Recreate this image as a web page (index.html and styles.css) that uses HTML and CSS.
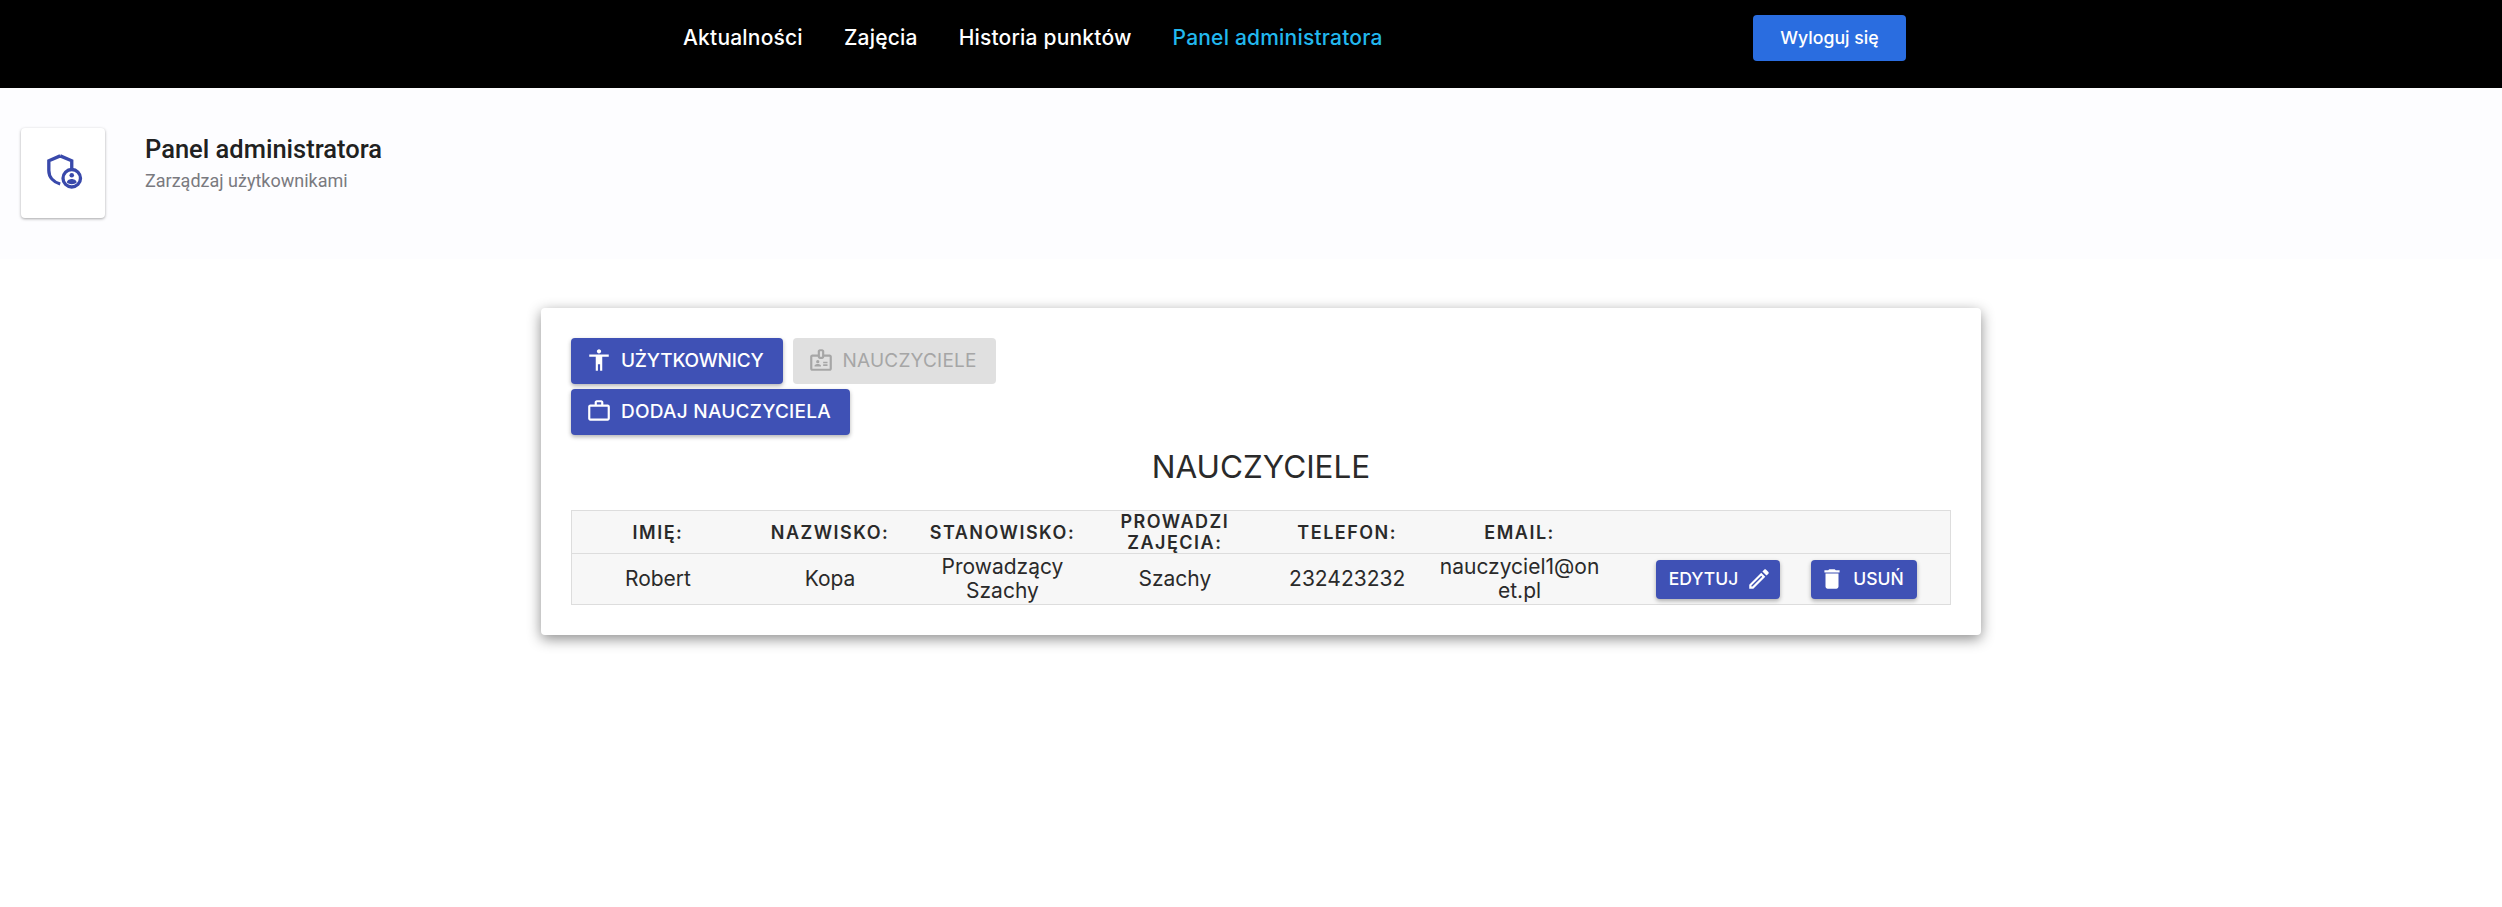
FILE: index.html
```html
<!DOCTYPE html>
<html lang="pl">
<head>
  <meta charset="UTF-8">
  <title>Panel administratora</title>
  <link rel="stylesheet" href="styles.css">
</head>
<body>
  <!-- Top navigation -->
  <nav class="navbar">
    <div class="nav-links">
      <a href="#">Aktualności</a>
      <a href="#">Zajęcia</a>
      <a href="#">Historia punktów</a>
      <a href="#" class="active">Panel administratora</a>
    </div>
    <button class="logout">Wyloguj się</button>
  </nav>

  <!-- Page title -->
  <header class="page-title">
    <div class="title-icon">
      <svg viewBox="0 0 24 24" width="42" height="42">
        <path class="shield" d="M10.4 2.2 17 5v6M10.4 2.2 3.9 5v5.5c0 3.8 2.7 6.7 6.5 7.8"/>
        <circle class="ring" cx="17" cy="15" r="5"/>
        <circle cx="17" cy="13.3" r="1.3"/>
        <path d="M14.2 17.4c0-1.4 1.9-2 2.8-2s2.8.6 2.8 2c-.7.6-1.7 1-2.8 1s-2.1-.4-2.8-1z"/>
      </svg>
    </div>
    <div>
      <h1>Panel administratora</h1>
      <p>Zarządzaj użytkownikami</p>
    </div>
  </header>

  <main class="card">
    <div class="actions">
      <button class="btn tight">
        <svg viewBox="0 0 24 24"><path d="M12 2c1.1 0 2 .9 2 2s-.9 2-2 2-2-.9-2-2 .9-2 2-2zm9 7h-6v13h-2v-6h-2v6H9V9H3V7h18v2z"/></svg>
        Użytkownicy
      </button>
      <button class="btn disabled">
        <svg viewBox="0 0 24 24"><path d="M20 7h-5V4c0-1.1-.9-2-2-2h-2c-1.1 0-2 .9-2 2v3H4c-1.1 0-2 .9-2 2v11c0 1.1.9 2 2 2h16c1.1 0 2-.9 2-2V9c0-1.1-.9-2-2-2zM11 4h2v5h-2V4zm9 16H4V9h5c0 1.1.9 2 2 2h2c1.1 0 2-.9 2-2h5v11z"/><path d="M14 13.5h4V15h-4zM14 16h4v1.5h-4z"/><circle cx="9" cy="13.5" r="1.5"/><path d="M6 18h6v-.75c0-1-2-1.5-3-1.5s-3 .5-3 1.5V18z"/></svg>
        Nauczyciele
      </button>
      <button class="btn">
        <svg viewBox="0 0 24 24"><path d="M14 6V4h-4v2h4zM4 8v11h16V8H4zm16-2c1.11 0 2 .89 2 2v11c0 1.11-.89 2-2 2H4c-1.11 0-2-.89-2-2l.01-11c0-1.11.88-2 1.99-2h4V4c0-1.11.89-2 2-2h4c1.11 0 2 .89 2 2v2h4z"/></svg>
        Dodaj nauczyciela
      </button>
    </div>

    <h2>NAUCZYCIELE</h2>

    <table>
      <thead>
        <tr>
          <th>Imię:</th>
          <th>Nazwisko:</th>
          <th>Stanowisko:</th>
          <th>Prowadzi zajęcia:</th>
          <th>Telefon:</th>
          <th>Email:</th>
          <th></th>
          <th></th>
        </tr>
      </thead>
      <tbody>
        <tr>
          <td>Robert</td>
          <td>Kopa</td>
          <td>Prowadzący Szachy</td>
          <td>Szachy</td>
          <td>232423232</td>
          <td class="email">nauczyciel1@onet.pl</td>
          <td>
            <button class="btn small edit">
              Edytuj
              <svg viewBox="0 0 24 24"><path d="M3 17.25V21h3.75L17.81 9.94l-3.75-3.75L3 17.25zM5.92 19H5v-.92l9.06-9.06.92.92L5.92 19zM20.71 5.63l-2.34-2.34c-.2-.2-.45-.29-.71-.29s-.51.1-.7.29l-1.83 1.83 3.75 3.75 1.83-1.83c.39-.39.39-1.02 0-1.41z"/></svg>
            </button>
          </td>
          <td>
            <button class="btn small">
              <svg viewBox="0 0 24 24"><path d="M6 19c0 1.1.9 2 2 2h8c1.1 0 2-.9 2-2V7H6v12zM19 4h-3.5l-1-1h-5l-1 1H5v2h14V4z"/></svg>
              Usuń
            </button>
          </td>
        </tr>
      </tbody>
    </table>
  </main>
</body>
</html>
```

FILE: styles.css
```css
/* General */
body {
  margin: 0;
  min-height: 100vh;
  font-family: 'Inter', 'Liberation Sans', sans-serif;
  color: #2a2a2a;
  background: #fff;
}

button {
  font-family: inherit;
  border: none;
  cursor: pointer;
}

/* Navbar */
.navbar {
  height: 88px;
  background: #000;
  display: flex;
  align-items: center;
  padding-left: 683px;
  padding-bottom: 13px;
  box-sizing: border-box;
}

.nav-links {
  display: flex;
  gap: 41px;
  width: 1070px;
}

.nav-links a {
  color: #fff;
  font-size: 21px;
  font-weight: 500;
  line-height: 28px;
  letter-spacing: 0.2px;
  text-decoration: none;
}

.nav-links a.active {
  color: #22b8ee;
}

.logout {
  width: 153px;
  height: 46px;
  background: #2a6de0;
  color: #fff;
  font-size: 17.7px;
  font-weight: 500;
  border-radius: 4px;
}

/* Page title */
.page-title {
  height: 171px;
  background: #fdfdff;
  display: flex;
  align-items: flex-start;
  box-sizing: border-box;
  padding: 40px 0 0 21px;
  gap: 40px;
}

.title-icon {
  width: 84px;
  height: 90px;
  background: #fff;
  border-radius: 4px;
  box-shadow: 0 1px 3px rgba(0, 0, 0, 0.35);
  display: flex;
  align-items: center;
  justify-content: center;
}

.title-icon svg {
  fill: #3949ab;
}

.title-icon .shield {
  fill: none;
  stroke: #3949ab;
  stroke-width: 1.9;
}

.title-icon .ring {
  fill: #fff;
  stroke: #3949ab;
  stroke-width: 1.9;
}

.page-title h1 {
  margin: 5px 0 0;
  font-family: 'Roboto', sans-serif;
  font-size: 25.5px;
  font-weight: 500;
  line-height: 32px;
  color: #212121;
}

.page-title p {
  margin: 4px 0 0;
  font-family: 'Roboto', sans-serif;
  font-size: 18px;
  line-height: 24px;
  color: #7a7a80;
}

/* Card */
.card {
  width: 1440px;
  box-sizing: border-box;
  margin: 49px 0 0 541px;
  padding: 30px;
  background: #fff;
  border-radius: 4px;
  box-shadow: 0 4px 14px rgba(0, 0, 0, 0.45);
}

.actions {
  display: flex;
  flex-wrap: wrap;
  gap: 5px 10px;
  width: 500px;
}

.btn {
  display: inline-flex;
  align-items: center;
  gap: 9px;
  height: 46px;
  padding: 0 19px 2px 15px;
  box-sizing: border-box;
  background: #3f51b5;
  color: #fff;
  font-size: 19px;
  font-weight: 500;
  letter-spacing: 0.25px;
  text-transform: uppercase;
  border-radius: 4px;
  box-shadow: 0 2px 4px rgba(0, 0, 0, 0.3);
}

.btn svg {
  width: 26px;
  height: 26px;
  fill: currentColor;
}

.btn.tight {
  letter-spacing: -0.2px;
}

.btn.disabled {
  background: #e0e0e0;
  color: #a6a6a6;
  box-shadow: none;
  font-weight: 400;
  letter-spacing: 0.2px;
}

.btn.small {
  height: 39px;
  padding: 0 13px 1px 8px;
  font-size: 17.5px;
  letter-spacing: 0;
  gap: 8px;
}

.btn.edit {
  margin-left: 50px;
  padding: 0 8px 1px 13px;
}

h2 {
  margin: 10px 0 0;
  font-size: 31.5px;
  font-weight: 400;
  line-height: 44px;
  text-align: center;
}

/* Table */
table {
  width: 100%;
  table-layout: fixed;
  margin-top: 21px;
  border-collapse: collapse;
  background: #f7f7f7;
  border: 1px solid #ddd;
}

th, td {
  padding: 0;
  text-align: center;
  font-size: 21px;
  line-height: 24px;
}

th {
  height: 42px;
  font-size: 18px;
  font-weight: 600;
  line-height: 21px;
  letter-spacing: 1.5px;
  text-transform: uppercase;
  border-bottom: 1px solid #ddd;
}

td {
  height: 50px;
}

td.email {
  padding: 0 6px;
  word-break: break-all;
}
```
